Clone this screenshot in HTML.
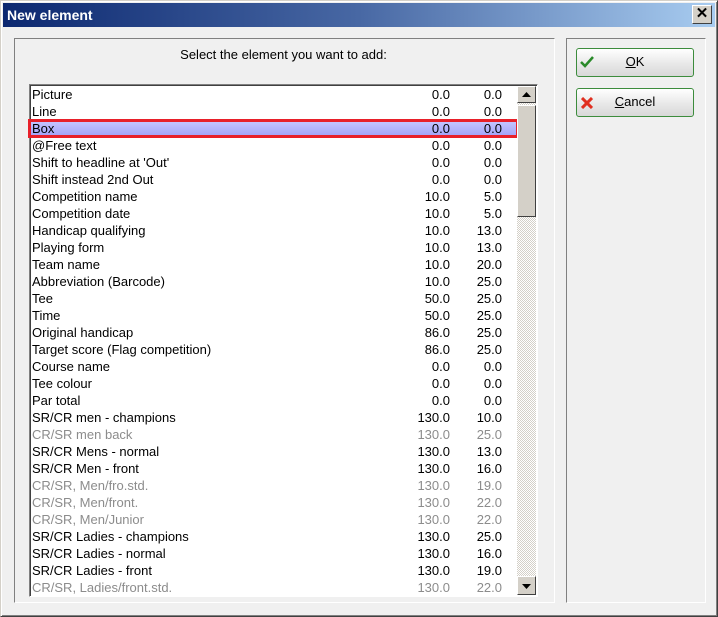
<!DOCTYPE html>
<html><head><meta charset="utf-8"><style>
*{margin:0;padding:0;box-sizing:border-box}
body{width:718px;height:617px;background:#f0f0f0;font-family:"Liberation Sans",Arial,sans-serif;font-size:13px;position:relative;overflow:hidden}
.win{position:absolute;left:0;top:0;width:718px;height:617px;border:1px solid #d4d0c8;border-right-color:#404040;border-bottom-color:#404040;box-shadow:inset 1px 1px 0 #fff,inset -1px -1px 0 #808080}
.title{position:absolute;left:3px;top:3px;width:712px;height:24px;background:linear-gradient(90deg,#0c2870,#4868a4 50%,#a8ccf0);color:#fff;font-weight:bold;font-size:14px;line-height:24px;padding-left:4px}
.close{position:absolute;left:692px;top:5px;width:20px;height:19px;background:#d4d0c8;border:1px solid;border-color:#fff #404040 #404040 #fff;font-weight:bold;font-size:15px;line-height:16px;text-align:center;color:#000}
.panel{position:absolute;border:1px solid;border-color:#808080 #fff #fff #808080}
.lbl{position:absolute;left:6px;width:555px;text-align:center;top:47px;color:#000}
.list{position:absolute;left:29px;top:84px;width:509px;height:513px;background:#fff;border:1px solid;border-color:#808080 #fff #fff #808080;box-shadow:inset 1px 1px 0 #404040}
.row{position:absolute;left:2px;width:487px;height:17px;line-height:17px;white-space:nowrap}
.row span{position:absolute;left:1px}
.g{color:#8c8c8c}
.sel{background:linear-gradient(#c8c8ff,#a0a0f8);outline:3px solid #e8202a;outline-offset:-2px;width:489px}
.sb{position:absolute;left:517px;top:86px;width:19px;height:509px;background:repeating-conic-gradient(#d4d0c8 0 25%,#fff 0 50%) 0 0/2px 2px}
.btn{position:absolute;left:0;width:19px;background:#d4d0c8;border:1px solid;border-color:#fff #404040 #404040 #fff}
.ok,.cn{position:absolute;left:576px;width:118px;height:29px;border:1px solid #3c8c3c;border-radius:3px;background:linear-gradient(#fff,#e6e6e6 60%,#d8d8d8);text-align:center;line-height:26px}
</style></head><body>
<div class="win"></div>
<div class="title">New element</div>
<div class="close">✕</div>
<div class="panel" style="left:14px;top:38px;width:541px;height:565px"></div>
<div class="panel" style="left:566px;top:38px;width:140px;height:565px"></div>
<div class="lbl">Select the element you want to add:</div>
<div class="list"></div>
<div id="rows"></div>
<div class="sb">
<div class="btn" style="top:0;height:17px"><svg width="17" height="15"><path d="M4 10h9L8.5 5z" fill="#000"/></svg></div>
<div class="btn" style="top:19px;height:112px"></div>
<div class="btn" style="top:490px;height:19px"><svg width="17" height="17"><path d="M4 7h9l-4.5 5z" fill="#000"/></svg></div>
</div>
<div class="ok" style="top:48px"><svg style="position:absolute;left:3px;top:7px" width="14" height="12"><path d="M1 6l4 4 8-9" stroke="#2a8a2a" stroke-width="2.5" fill="none"/></svg><u>O</u>K</div>
<div class="cn" style="top:88px"><svg style="position:absolute;left:4px;top:8px" width="12" height="12"><path d="M1 1l10 10M11 1L1 11" stroke="#e03020" stroke-width="3"/></svg><u>C</u>ancel</div>
<script>
var d=[["Picture","0.0","0.0"],["Line","0.0","0.0"],["Box","0.0","0.0",0,1],["@Free text","0.0","0.0"],["Shift to headline at 'Out'","0.0","0.0"],["Shift instead 2nd Out","0.0","0.0"],["Competition name","10.0","5.0"],["Competition date","10.0","5.0"],["Handicap qualifying","10.0","13.0"],["Playing form","10.0","13.0"],["Team name","10.0","20.0"],["Abbreviation (Barcode)","10.0","25.0"],["Tee","50.0","25.0"],["Time","50.0","25.0"],["Original handicap","86.0","25.0"],["Target score (Flag competition)","86.0","25.0"],["Course name","0.0","0.0"],["Tee colour","0.0","0.0"],["Par total","0.0","0.0"],["SR/CR men - champions","130.0","10.0"],["CR/SR men back","130.0","25.0",1],["SR/CR Mens - normal","130.0","13.0"],["SR/CR Men - front","130.0","16.0"],["CR/SR, Men/fro.std.","130.0","19.0",1],["CR/SR, Men/front.","130.0","22.0",1],["CR/SR, Men/Junior","130.0","22.0",1],["SR/CR Ladies - champions","130.0","25.0"],["SR/CR Ladies - normal","130.0","16.0"],["SR/CR Ladies - front","130.0","19.0"],["CR/SR, Ladies/front.std.","130.0","22.0",1]];
var h="";d.forEach(function(r,i){var e=r[4]?2:0;h+='<div class="row'+(r[3]?' g':'')+(r[4]?' sel':'')+'" style="left:29px;top:'+(86+i*17)+'px"><span style="left:3px">'+r[0]+'</span><span style="left:auto;right:'+(487-450+29+e)+'px">'+r[1]+'</span><span style="left:auto;right:'+(487-502+29+e)+'px">'+r[2]+'</span></div>'});
document.getElementById("rows").innerHTML=h;
</script>
</body></html>
